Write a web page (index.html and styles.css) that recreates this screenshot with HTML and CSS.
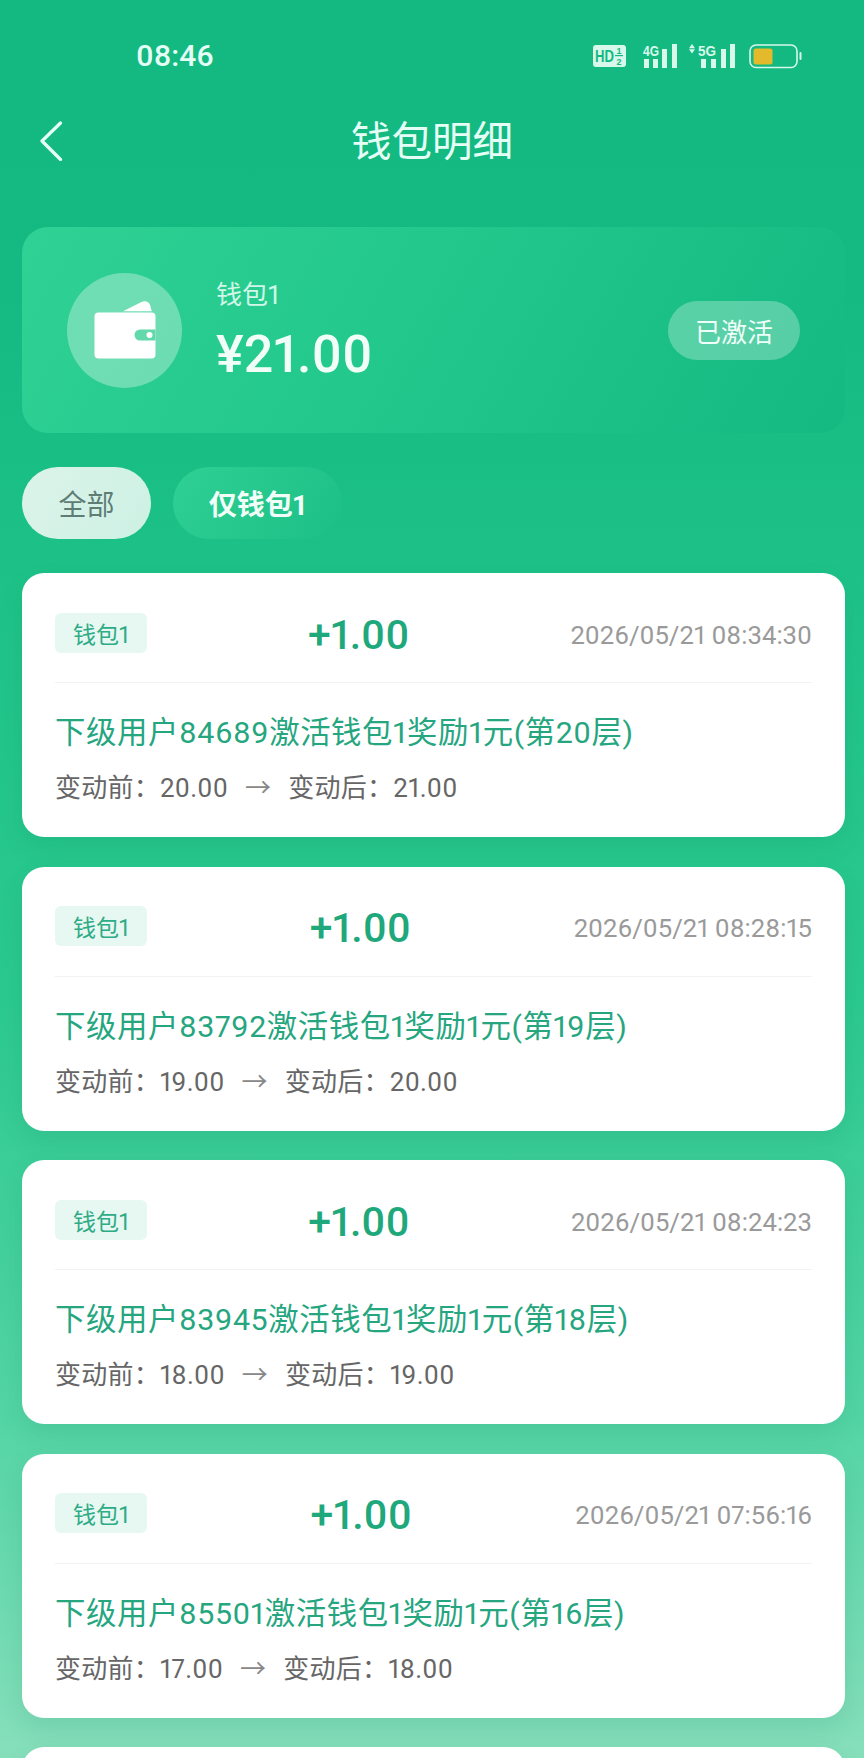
FILE: index.html
```html
<!DOCTYPE html>
<html lang="zh-CN">
<head>
<meta charset="utf-8">
<title>钱包明细</title>
<link rel="stylesheet" href="styles.css">
</head>
<body>
<div class="page">
  <header class="status">
    <span class="clock">08:46</span>
    <div class="status-icons">
      <svg class="ic-hd" viewBox="0 0 33 22" aria-hidden="true">
        <rect width="33" height="22" rx="3" fill="#d8f8ec"/>
        <text x="2" y="17" class="hd-t" textLength="19" lengthAdjust="spacingAndGlyphs">HD</text>
        <text x="23.500" y="9" class="hd-s">1</text>
        <rect x="22" y="10" width="8" height="1.200" fill="#13b981"/>
        <text x="23.500" y="19.500" class="hd-s">2</text>
      </svg>
      <svg class="ic-4g" viewBox="0 0 36 25" aria-hidden="true">
        <text x="1" y="12" class="net-t" textLength="16" lengthAdjust="spacingAndGlyphs">4G</text>
        <rect x="2" y="15" width="5" height="9" fill="#d8f8ec"/>
        <rect x="11" y="15" width="5" height="9" fill="#d8f8ec"/>
        <rect x="20" y="5" width="5" height="19" fill="#d8f8ec"/>
        <rect x="30" y="0" width="5" height="24" fill="#d8f8ec"/>
      </svg>
      <svg class="ic-5g" viewBox="0 0 47 25" aria-hidden="true">
        <path d="M3 0l3 4.300H0zM3 9.500l3-4.300H0z" fill="#d8f8ec"/>
        <text x="9" y="12" class="net-t" textLength="18" lengthAdjust="spacingAndGlyphs">5G</text>
        <rect x="12" y="15" width="5" height="9" fill="#d8f8ec"/>
        <rect x="22" y="15" width="5" height="9" fill="#d8f8ec"/>
        <rect x="32" y="5" width="5" height="19" fill="#d8f8ec"/>
        <rect x="41" y="0" width="5" height="24" fill="#d8f8ec"/>
      </svg>
      <svg class="ic-bat" viewBox="0 0 54 25" aria-hidden="true">
        <rect x="1" y="1" width="47" height="22.500" rx="6" fill="none" stroke="#d8f8ec" stroke-width="1.600"/>
        <rect x="4.500" y="4.500" width="19" height="16" rx="2.500" fill="#e4b92b"/>
        <rect x="50.500" y="8" width="2" height="8" rx="1" fill="#d8f8ec"/>
      </svg>
    </div>
  </header>

  <nav class="nav">
    <svg class="back" viewBox="0 0 24 40" aria-hidden="true">
      <path d="M21.500 2L3 20l18.500 18.500" fill="none" stroke="#e6fff6" stroke-width="3.200" stroke-linecap="round" stroke-linejoin="round"/>
    </svg>
    <h1 class="title">钱包明细</h1>
  </nav>

  <section class="wallet">
    <div class="wallet-icon">
      <svg viewBox="0 0 62 58" aria-hidden="true">
        <path d="M29 10.200L47.500 1c3.500-1.500 7.500-.5 8.500 3l1.800 6.200z" fill="#fff"/>
        <path d="M4.500 11.500h53a4 4 0 0 1 4 4V53.500a4 4 0 0 1-4 4h-53a4 4 0 0 1-4-4V15.500a4 4 0 0 1 4-4z" fill="#fff"/>
        <path d="M46 28.500h15.500v11H46a5.500 5.500 0 0 1 0-11z" fill="#62d9ab"/>
        <circle cx="55.500" cy="34" r="3" fill="#fff"/>
      </svg>
    </div>
    <div class="wallet-info">
      <div class="wallet-name">钱包1</div>
      <div class="wallet-amount">¥21.00</div>
    </div>
    <div class="wallet-status">已激活</div>
  </section>

  <div class="tabs">
    <div class="tab tab-on">全部</div>
    <div class="tab tab-off">仅钱包1</div>
  </div>

  <main class="list">
    <article class="card">
      <div class="card-head">
        <span class="tag">钱包1</span>
        <span class="delta">+1.00</span>
        <span class="time">2026/05/21 08:34:30</span>
      </div>
      <div class="desc">下级用户84689激活钱包1奖励1元(第20层)</div>
      <div class="meta"><span>变动前：20.00</span><span class="arrow">→</span><span>变动后：21.00</span></div>
    </article>
    <article class="card">
      <div class="card-head">
        <span class="tag">钱包1</span>
        <span class="delta">+1.00</span>
        <span class="time">2026/05/21 08:28:15</span>
      </div>
      <div class="desc">下级用户83792激活钱包1奖励1元(第19层)</div>
      <div class="meta"><span>变动前：19.00</span><span class="arrow">→</span><span>变动后：20.00</span></div>
    </article>
    <article class="card">
      <div class="card-head">
        <span class="tag">钱包1</span>
        <span class="delta">+1.00</span>
        <span class="time">2026/05/21 08:24:23</span>
      </div>
      <div class="desc">下级用户83945激活钱包1奖励1元(第18层)</div>
      <div class="meta"><span>变动前：18.00</span><span class="arrow">→</span><span>变动后：19.00</span></div>
    </article>
    <article class="card">
      <div class="card-head">
        <span class="tag">钱包1</span>
        <span class="delta">+1.00</span>
        <span class="time">2026/05/21 07:56:16</span>
      </div>
      <div class="desc">下级用户85501激活钱包1奖励1元(第16层)</div>
      <div class="meta"><span>变动前：17.00</span><span class="arrow">→</span><span>变动后：18.00</span></div>
    </article>
    <article class="card card-cut"></article>
  </main>
</div>
</body>
</html>
```

FILE: styles.css
```css
* { box-sizing: border-box; }
html, body { margin: 0; padding: 0; }
body {
  width: 864px;
  height: 1758px;
  overflow: hidden;
  font-family: Roboto, "Noto Sans CJK SC", sans-serif;
  font-variant-numeric: proportional-nums;
  font-feature-settings: "pnum" 1;
}
.page {
  height: 1758px;
  overflow: hidden;
  padding: 0 19px 0 22px;
  background: linear-gradient(180deg, #13b981 0, #14ba82 300px, #1fc389 620px, #2bc98f 1000px, #55d5a6 1430px, #86dfbb 1758px);
}

.status {
  height: 112px;
  display: flex;
  align-items: center;
  justify-content: space-between;
  padding: 0 42px 0 114px;
}
.clock { font-size: 30px; font-weight: 500; padding-bottom: 2px; color: #e6fff6; }
.status-icons { display: flex; align-items: center; }
.status-icons svg { display: block; overflow: visible; }
.ic-hd { width: 33px; height: 22px; margin-right: 16px; }
.ic-4g { width: 36px; height: 25px; margin-right: 11px; }
.ic-5g { width: 47px; height: 25px; margin-right: 13px; }
.ic-bat { width: 54px; height: 25px; }
.hd-t { font: 700 17px "Liberation Sans", sans-serif; fill: #13b981; }
.hd-s { font: 700 9px "Liberation Sans", sans-serif; fill: #13b981; }
.net-t { font: 700 15px "Liberation Sans", sans-serif; fill: #d8f8ec; }

.nav {
  height: 56px;
  position: relative;
  display: flex;
  align-items: center;
  justify-content: center;
  margin-right: 3px;
}
.back { position: absolute; left: 17px; top: 9px; width: 24px; height: 40px; }
.title { margin: 0; padding-top: 4px; font-size: 40.500px; font-weight: 400; color: #e6fff6; line-height: 56px; }

.wallet {
  margin-top: 59px;
  height: 206px;
  display: flex;
  align-items: center;
  padding: 0 45px 0 45px;
  border-radius: 26px;
  background: linear-gradient(120deg, #30d194 0%, #22c88c 45%, #14b982 100%);
}
.wallet-icon {
  width: 115px;
  height: 115px;
  border-radius: 50%;
  background: rgba(255,255,255,.32);
  display: flex;
  align-items: center;
  justify-content: center;
  flex: none;
}
.wallet-icon svg { width: 62px; height: 58px; display: block; }
.wallet-info { margin-left: 34px; flex: 1; padding-top: 2px; }
.wallet-name { font-size: 26px; line-height: 36px; color: #d2f7e8; }
.wallet-amount { font-size: 52px; line-height: 60px; margin-top: 12px; color: #f2fff9; font-weight: 500; }
.wallet-status {
  width: 132px;
  height: 59px;
  border-radius: 30px;
  background: rgba(255,255,255,.28);
  color: #f0fff9;
  font-size: 26px;
  display: flex;
  align-items: center;
  justify-content: center;
}

.tabs { margin-top: 34px; display: flex; gap: 22px; }
.tab {
  height: 72px;
  border-radius: 36px;
  font-size: 28px;
  display: flex;
  align-items: center;
  justify-content: center;
}
.tab-on { width: 129px; background: linear-gradient(120deg, #dcf3ea, #cdf1e4); color: #5e7d75; }
.tab-off {
  width: 169px;
  background: linear-gradient(125deg, #2fd094 0%, #1cbf86 100%);
  color: #f2fff9;
  font-weight: 700;
}

.list { margin-top: 34px; display: flex; flex-direction: column; gap: 29.500px; }
.card {
  height: 264px;
  padding: 40px 33px 0 33px;
  background: #fff;
  border-radius: 22px;
  box-shadow: 0 10px 24px rgba(10,110,70,.12);
}
.card-cut { flex: none; }
.card-head {
  display: flex;
  align-items: center;
  height: 70px;
  padding-bottom: 30px;
  border-bottom: 1px solid #f1f3f2;
}
.tag {
  width: 92px;
  height: 40px;
  border-radius: 6px;
  background: #e7f7f2;
  color: #2eac85;
  font-size: 23px;
  display: flex;
  align-items: center;
  justify-content: center;
}
.delta { flex: 1; text-align: center; padding-top: 4px; font-size: 41px; font-weight: 500; color: #1fa87c; }
.time { font-size: 25.700px; padding-top: 4px; color: #9a9a9a; }
.desc { margin-top: 30px; font-size: 30.400px; line-height: 40px; letter-spacing: .6px; color: #25a67f; white-space: nowrap; }
.meta { margin-top: 17px; font-size: 26px; line-height: 36px; letter-spacing: .25px; color: #666; display: flex; white-space: nowrap; }
.arrow { margin: 0 17px; color: #888; }
```
